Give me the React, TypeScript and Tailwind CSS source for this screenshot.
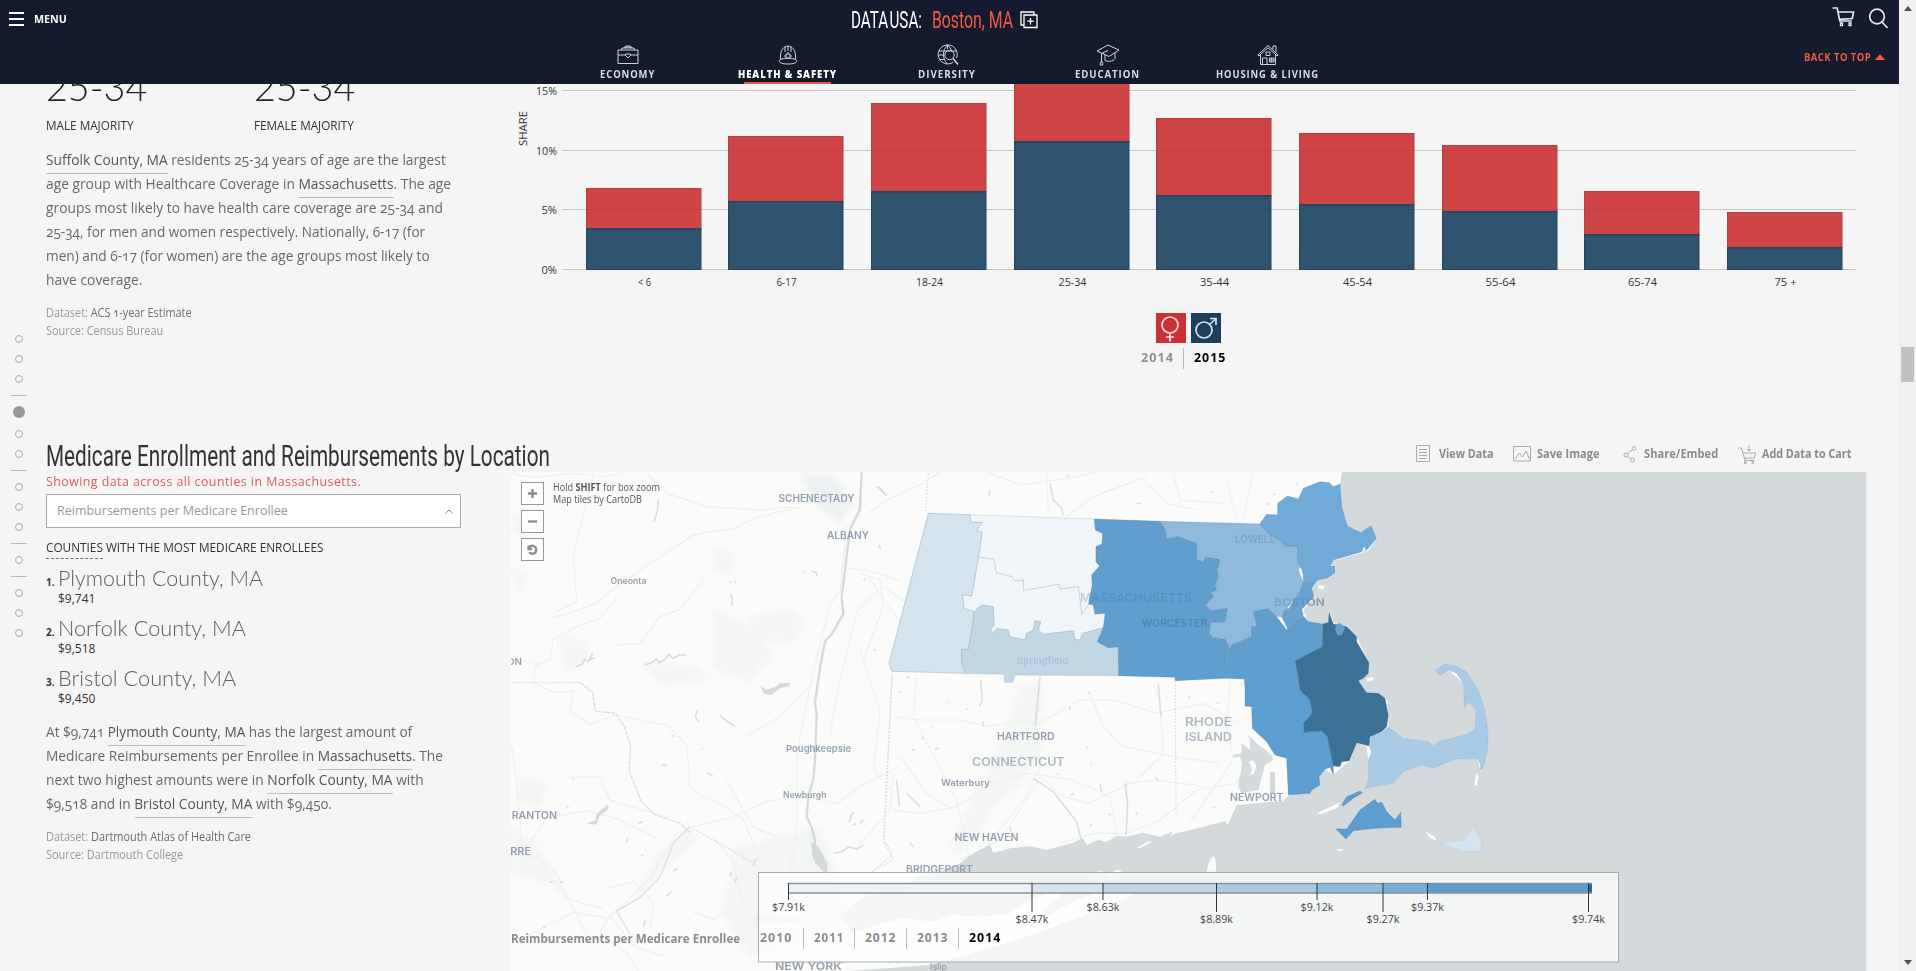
import React, { useLayoutEffect, useRef } from 'react';

const SANS = "font-['Open_Sans','Noto_Sans',sans-serif]";

/** Single line of text, squeezed or stretched horizontally to a given width. */
function Fit({ w, className = '', children }: { w: number; className?: string; children: React.ReactNode }) {
  const ref = useRef<HTMLSpanElement>(null);
  useLayoutEffect(() => {
    const el = ref.current;
    if (el && el.offsetWidth) el.style.transform = `scaleX(${w / el.offsetWidth})`;
  }, [w]);
  return (
    <span className={`block shrink-0 whitespace-nowrap ${className}`} style={{ width: w }}>
      <span ref={ref} className="inline-block origin-left">{children}</span>
    </span>
  );
}

const Link = ({ children }: { children: React.ReactNode }) => (
  <span className="border-b border-[#bdbdbd] pb-[3.500px] text-[#555]">{children}</span>
);

/* ---------- header ---------- */

const iconProps = { fill: 'none', stroke: '#cfd3dc', strokeWidth: 1, strokeLinejoin: 'round' as const };

const icons = {
  economy: (
    <svg width="22" height="22" viewBox="0 0 22 22" {...iconProps}>
      <path d="M1 6h20v13.500H1zM1 11h7.500M13.500 11H21M8.500 10h5v1.500L11 13.800 8.500 11.500zM4 6l1-2h12l1 2M7 4l1.500-2h5L15 4M9 4V3h4v1" />
    </svg>
  ),
  health: (
    <svg width="22" height="22" viewBox="0 0 22 22" {...iconProps}>
      <path d="M3.500 15.500V12c0-5 2.500-9.500 7.500-10 5 .5 7.500 5 7.500 10v3.500M2 17c1-2 4-2.500 9-2.500s8 .5 9 2.500c-.5 2-4 3-9 3s-8.500-1-9-3zM8 8V2.500M11 7V2M14 8V2.500M10 9h2v2h2v2h-2v1.500h-2V13H8v-2h2z" />
    </svg>
  ),
  diversity: (
    <svg width="22" height="22" viewBox="0 0 22 22" {...iconProps}>
      <path d="M16 18.300A9.500 9.500 0 1 1 19.500 14M2 7h17.500M1.500 11H7M3 15.500h5M10.500 1c-3 3-4 6-4 9.500s1 6.500 4 9.500M10.500 1v4M10.500 1c2 1.500 3.500 3.500 4 6" />
      <circle cx="12.500" cy="11" r="4.700" />
      <path strokeWidth="1.500" d="M16 14.500l5 6" />
    </svg>
  ),
  education: (
    <svg width="24" height="22" viewBox="0 0 24 22" {...iconProps}>
      <path d="M1 7l11-6 11 5-10 6.500zM5.500 9.500V18M12 6.500l-6.500 3M19 9v5.500c-2 3-7 3.500-10 2v-6M4.300 18h2.400v3H4.300z" />
    </svg>
  ),
  housing: (
    <svg width="22" height="22" viewBox="0 0 22 22" {...iconProps}>
      <path d="M.8 11L11 1.500 21.200 11l-1.200.8L11 3.800 2 11.800zM3.500 11v9.500h15V11M16 5V2h3v6M5.500 20.500V14h4.500v6.500M12.500 14h4.500v4h-4.500zM14.700 14v4M12.500 16H17M9 8h4v3.500H9z" />
    </svg>
  ),
};

const tabs = [
  { label: 'ECONOMY', w: 55, icon: icons.economy },
  { label: 'HEALTH & SAFETY', w: 99, icon: icons.health, active: true },
  { label: 'DIVERSITY', w: 58, icon: icons.diversity },
  { label: 'EDUCATION', w: 65, icon: icons.education },
  { label: 'HOUSING & LIVING', w: 103, icon: icons.housing },
];

function Header() {
  return (
    <header className="relative flex h-[84px] shrink-0 flex-col bg-[#141b2e] text-white">
      <div className="flex h-[40px] items-start">
        <div className="flex w-[851px] items-center pt-[10px] pl-[9px]">
          <div className="flex w-[25px] flex-col gap-[4px]">
            <i className="h-[2px] w-[15px] bg-white" />
            <i className="h-[2px] w-[15px] bg-white" />
            <i className="h-[2px] w-[15px] bg-white" />
          </div>
          <Fit w={33} className="text-[11px] leading-[18px] font-bold">MENU</Fit>
        </div>
        <Fit w={71} className="font-['Roboto',sans-serif] text-[24px] leading-[40px]">DATA<span className="ml-[2px]">USA:</span></Fit>
        <Fit w={81} className="ml-[10px] font-['Roboto',sans-serif] text-[24px] leading-[40px] text-[#ef5a46]">Boston, MA</Fit>
        <svg className="mt-[11px] ml-[7px]" width="18" height="18" viewBox="0 0 18 18" fill="none" stroke="#fff" strokeWidth="1.300">
          <path d="M4 14H1V1h13v3M4 4h13v12.500H4zM10.500 7v6.500M7.300 10.200h6.400" />
        </svg>
        <div className="ml-auto flex items-start gap-[13px] pt-[6px] pr-[10px]">
          <svg width="23" height="22" viewBox="0 0 23 22" fill="none" stroke="#e4e7ee" strokeWidth="1.700">
            <path d="M.5 2h4.700l2.600 13h12M5.800 6H21.500l-1.300 6.500-13 .8" />
            <path d="M8.500 17h2v2.500h-2zM17 17h2v2.500h-2z" strokeWidth="1.300" />
          </svg>
          <svg className="mt-px" width="21" height="22" viewBox="0 0 21 22" fill="none" stroke="#e4e7ee" strokeWidth="1.700">
            <circle cx="9" cy="9.500" r="7.300" />
            <path d="M14 15l5.500 6" />
          </svg>
        </div>
      </div>
      <div className="flex h-[44px] pl-[547px]">
        {tabs.map((t) => (
          <div key={t.label} className="flex w-[160px] flex-col items-center pt-[4px]">
            <div className="flex h-[22px] justify-center pl-px">{t.icon}</div>
            <Fit w={t.w} className={`text-[10.5px] leading-[16px] tracking-[1px] ${t.active ? 'font-extrabold text-white' : 'font-bold text-[#d8dbe3]'}`}>{t.label}</Fit>
            {t.active && <i className="h-[2px] w-[87px] bg-[#ef5a46]" />}
          </div>
        ))}
        <div className="ml-auto flex items-start gap-[4px] pt-[8px] pr-[14px]">
          <Fit w={67} className="text-[10px] leading-[18px] font-bold tracking-[0.500px] text-[#ef5a46]">BACK TO TOP</Fit>
          <svg className="mt-[6px]" width="10" height="6" viewBox="0 0 10 6"><path d="M0 6L5 0l5 6z" fill="#ef5a46" /></svg>
        </div>
      </div>
    </header>
  );
}

/* ---------- age chart ---------- */

const bars = [
  { label: '< 6', x: 586, top: 188, mid: 228.5, tw: 13 },
  { label: '6-17', x: 728, top: 136, mid: 201.5, tw: 20 },
  { label: '18-24', x: 871, top: 103, mid: 191.5, tw: 27 },
  { label: '25-34', x: 1014, top: 70, mid: 141.500, tw: 28 },
  { label: '35-44', x: 1156, top: 118, mid: 195.5, tw: 29 },
  { label: '45-54', x: 1299, top: 133, mid: 204.5, tw: 29 },
  { label: '55-64', x: 1442, top: 145, mid: 211.5, tw: 30 },
  { label: '65-74', x: 1584, top: 191, mid: 234.500, tw: 29 },
  { label: '75 +', x: 1727, top: 212, mid: 247.500, tw: 22 },
];

function AgeChart() {
  return (
    <svg width="1388" height="224" viewBox="511 84 1388 224" className="block" fontSize="11" fill="#333">
      {[90.5, 150.5, 209.5, 269.5].map((y, i) => (
        <g key={y}>
          <path d={`M562.500 ${y}H1856`} stroke="#c6c6c6" />
          <text x="557" y={y + 4} textAnchor="end" textLength={i < 2 ? 21 : 15.500} lengthAdjust="spacingAndGlyphs">{['15%', '10%', '5%', '0%'][i]}</text>
        </g>
      ))}
      <text transform="translate(527 146) rotate(-90)" textLength="35" lengthAdjust="spacingAndGlyphs">SHARE</text>
      {bars.map((b) => (
        <g key={b.label}>
          <rect x={b.x + 0.5} y={b.top + 0.5} width="114.500" height={b.mid - b.top} fill="#c92c2d" fillOpacity=".88" stroke="#b04045" />
          <rect x={b.x + 0.5} y={b.mid} width="114.500" height={269.500 - b.mid} fill="#16405f" fillOpacity=".89" stroke="#27435e" />
          <text x={b.x + 58.500} y="285.500" textAnchor="middle" textLength={b.tw} lengthAdjust="spacingAndGlyphs">{b.label}</text>
        </g>
      ))}
    </svg>
  );
}

/* ---------- side navigation ---------- */

function SideDots() {
  return (
    <nav className="absolute top-[245px] left-0 flex w-[37px] flex-col items-center">
      {'ooo-Aoo-ooo-o-ooo'.split('').map((k, i) =>
        k === 'o' ? (
          <span key={i} className="flex h-[20px] items-center"><i className="size-[8px] rounded-full border border-[#aaa]" /></span>
        ) : k === 'A' ? (
          <span key={i} className="mb-[2.300px] flex h-[20px] items-center"><i className="size-[12px] rounded-full bg-[#999]" /></span>
        ) : (
          <span key={i} className="flex h-[12.900px] items-center"><i className="h-px w-[16px] bg-[#bbb]" /></span>
        ),
      )}
    </nav>
  );
}

/* ---------- map ---------- */

const west = {
  berkshire: '205,130 330,134 332,155 367,157 350,180 367,187 356,262 336,378 308,375 313,415 342,425 338,470 325,538 305,538 305,575 317,610 95,604 87,580',
  franklin: '330,134 703,147 706,180 728,190 726,222 708,230 708,275 719,288 695,315 697,345 686,402 665,435 655,350 600,357 597,343 490,362 490,330 465,333 455,320 408,308 402,268 356,262 367,187 350,180 367,157 332,155',
  hampshire: '356,262 402,268 408,308 455,320 465,333 490,330 490,362 597,343 600,357 655,350 665,435 686,402 700,405 705,432 736,430 730,473 668,490 660,510 645,508 640,482 548,493 535,480 542,455 525,452 520,480 500,490 495,510 450,500 445,480 410,476 400,488 390,480 402,465 400,410 365,405 342,425 313,415 308,375 336,378',
  hampden: '342,425 365,405 400,410 402,465 390,480 400,488 410,476 445,480 450,500 495,510 500,490 520,480 525,452 542,455 535,480 548,493 640,482 645,508 660,510 668,490 730,473 712,515 745,533 775,530 776,617 465,615 458,637 433,637 432,613 317,610 305,575 305,538 325,538 338,470',
  worcester: '703,147 900,154 917,180 918,207 955,200 1010,220 1010,270 1030,275 1036,262 1078,268 1078,285 1070,300 1076,320 1065,345 1070,360 1050,370 1062,378 1037,405 1052,423 1102,415 1095,455 1052,457 1048,490 1060,503 1095,508 1108,528 1095,560 1097,625 945,632 945,622 776,617 775,530 745,533 712,515 730,473 736,430 705,432 700,405 686,402 697,345 695,315 719,288 708,275 708,230 726,222 728,190 706,180',
};

const east = {
  middlesex: '-30,184 270,192 290,165 298,185 292,218 325,238 345,258 383,258 383,305 393,318 385,330 400,368 390,395 360,430 335,470 315,468 295,450 250,455 262,500 245,500 245,530 180,558 165,538 130,533 118,520 122,487 165,485 172,445 122,453 107,435 132,408 120,400 140,390 135,375 146,350 140,330 148,315 148,298 106,292 100,305 80,300 80,250 25,230 -12,237 -13,210',
  essex: '270,192 290,163 323,165 323,130 352,108 385,117 400,85 450,65 478,68 490,80 510,72 515,140 532,198 572,218 603,197 620,235 590,270 582,258 575,275 490,300 480,318 495,318 495,340 470,355 445,360 415,375 400,368 400,345 392,318 383,305 383,258 345,258 325,238 292,218',
  suffolk: '400,368 415,375 440,362 425,385 432,410 395,448 400,465 385,480 355,510 335,470 345,450 355,445 345,468 365,430 390,395',
  norfolk: '250,455 295,447 318,468 350,510 375,485 400,468 415,485 455,492 457,560 375,603 225,680 223,657 167,655 165,590 180,558 245,530 245,500 262,500',
  plymouth: '477,458 490,492 530,500 560,530 560,545 597,608 595,640 580,655 565,662 590,698 625,700 645,715 652,750 655,765 650,800 635,815 600,830 598,858 560,848 538,902 515,905 510,920 490,918 472,830 455,812 402,817 400,790 427,760 420,720 390,690 383,640 375,603 457,560 457,492 475,487',
  hull: '497,495 510,490 525,505 515,525 503,527 495,510',
  bristol: '225,680 375,603 383,640 390,690 420,720 427,760 400,790 402,817 455,812 472,830 490,918 490,945 480,922 465,928 447,950 450,975 425,990 420,1000 390,1002 355,1005 350,895 315,885 290,845 247,805 245,740 225,738',
  barnstable: '655,802 700,835 775,845 790,857 810,843 885,825 915,808 918,750 895,725 883,745 880,670 860,640 835,630 810,647 795,630 825,612 860,618 890,635 925,690 945,750 955,820 953,870 940,920 928,932 932,915 925,895 855,898 790,925 755,915 700,935 670,970 585,985 595,960 595,900 605,875 598,858 603,830 635,817',
  elizabeth: '515,1035 530,1010 570,993 578,998 550,1015 520,1038',
  vineyard: '498,1107 530,1107 570,1050 615,1018 622,1030 635,1027 650,1055 675,1080 692,1057 694,1102 615,1105 550,1112 528,1137',
  nantucket: '812,1150 885,1140 908,1098 935,1145 935,1175 880,1175',
};

const water =
  '517,36 510,72 515,140 532,198 572,218 603,197 622,235 592,275 585,265 578,278 488,303 482,315 498,318 496,343 465,357 440,362 425,390 435,410 400,450 415,485 445,495 475,485 477,458 492,488 530,500 560,530 597,608 595,640 565,662 590,698 625,700 652,720 655,770 655,802 700,835 775,845 790,857 885,825 915,808 918,750 895,725 883,745 880,670 835,630 810,647 795,630 825,612 860,618 890,635 925,690 945,750 955,820 953,870 930,935 925,895 855,898 790,925 755,915 700,935 670,970 585,985 595,960 595,900 590,860 560,848 540,902 512,925 490,945 465,928 447,950 450,975 425,990 355,1008 340,1022 200,1035 180,1080 172,1095 165,1083 100,1100 0,1125 10,1113 -30,1130 -80,1118 -130,1130 -160,1128 -190,1145 -215,1140 -250,1155 -262,1135 -290,1148 -370,1170 -420,1158 -480,1165 -530,1178 -540,1155 -590,1180 -630,1210 -680,1230 -750,1250 -800,1275 -860,1290 -930,1320 -990,1370 -960,1400 -960,1535 2200,1535 2200,36';

const roads = [
  'M30 0q60 20 130 8t150 4l60-12M280 0l-30 120-30 130 10 130-60 30M0 560l60-10 50 20 40-20 10-60 80-40 60-20 50-60M150 430l60-15 80-30 60-50 90-60 60-40 80-50 50-10 70-10 60-30 80-20 70-15',
  'M440 0l60 60 120 40 160 10 100-10M340 510l80-5 60-80 60-20 70-90M0 690l40 140 30 300M110 560l-10 60 60 30 60-5-10 60 60 40 80-30 80 20 70 10 60 60 10 120 30 30 70 30 60 40 50 120',
  'M80 1110l60-90 120-20 80 20 130 60M110 1130l60 60 60 120 30 60 100 30M570 1050l120-30 120-50 120-10 80 20 80-60 90-40',
  'M570 1050l-60 50-60 100-60 60-60 50-30 50 80 60 40 60',
  'M1085 0l-10 130-35 30-20 190-30 40-50 200-40 190-10 60 0 200-20 150 10 120M1100 300l70 100 30 40M1130 350l-60 60-60 250-20 120M1030 280l80 10 90 30',
  'M0 1110l110 30 90 120 110 30M200 900l100 0 30 70 180 50M680 910l80 140 80 30 70 120M740 780l100-60 90-90',
  'M320 1230l80-20 60 60-10 80M60 1380l160-80 120 20 60 80 90 30M640 1080l60 70 30 130M580 1300l60 20 90-50',
];

const ctRoads = [
  'M100 200l80 10 120 0 90 20 90-20 60 10 120-70 100 0 130 40 140-30 110 60',
  'M170 80l-10 120 130 250 40 180M540 80l-10 150 10 120-50 100-110 140M300 630l120-60 60-90 60-100 70 60 80 20 120-60 80-10 150 20',
  'M800 390l0 160M880 100l20 60 10 150-90 90M100 480l80 10 110-20 90-60 120-40 140 20 110 50 30 160M690 130l40 100 60 60 150 30 140 20',
  'M1110 90l-10 140 20 100-70 100-60 90M600 580l100-30 100 0 100-40 110-90 120-20 40-80M120 320l80 110 80 50M0 0l60 180-20 180 60 70M0 580l90-100 10-110',
];

const lakes =
  'M475 175l-2 30-10 36M228 670l18-6 8-15 12 6 12-25M270 650l15-6M435 665l20-6 15-12 6 12 20-10 10-15 14 12 18-10 22 0M592 800l-6 20 10 14M660 815l20 16 25 16M692 455l5 14-2 22M688 420h6M702 419h6M910 392h5M936 388l12 4 4 12M485 960l16 4M515 876h8M604 914h4M620 985l18 8M1048 1130l6-20 8-10M1060 1140l8-6M1080 1135l10-12M1000 1222l26-4 20-14 24 6 20-12M760 1262l8-24M380 1180l2 10M425 1230h6M520 1275l12-8M415 1135l14-6M705 1310l4-16M690 1290l4-12M1138 310l3 10M1135 137l22 26M1122 620h4M1092 412h4M200 1085h6M220 1000v6M430 1440l6-20M500 1350l14-14M130 1440h8M150 1308h6M180 1310l10-4';

type MapLabel = [string, number, number, number, number, string?];
const labels: MapLabel[] = [
  ['SCHENECTADY', 778.5, 502, 76, 10],
  ['ALBANY', 827, 538.5, 42, 10],
  ['Oneonta', 610.5, 583.5, 36, 8.5],
  ['ON', 507, 664.500, 15, 9.5],
  ['Poughkeepsie', 786, 752, 65, 9.500],
  ['Newburgh', 783, 798, 43.500, 8.5],
  ['SCRANTON', 497, 819, 60, 10],
  ['BARRE', 495, 855, 36, 10],
  ['HARTFORD', 997, 740, 57.500, 10.500],
  ['CONNECTICUT', 972, 766, 92.500, 12, '#a9b6c0'],
  ['Waterbury', 941, 786, 49, 9],
  ['NEW HAVEN', 954.500, 841, 64, 10],
  ['BRIDGEPORT', 906, 873, 67, 10],
  ['NEW YORK', 775, 970, 67, 11],
  ['Islip', 930, 970, 17, 8.500],
  ['Stamford', 863, 899, 40, 9, '#c4cad2'],
  ['Paterson', 757, 922, 41, 9, '#c4cad2'],
  ['RHODE', 1185, 726, 47, 12, '#a9b6c0'],
  ['ISLAND', 1185, 741, 47, 12, '#a9b6c0'],
  ['NEWPORT', 1230, 801, 53.500, 10],
  ['BOSTON', 1274, 605.500, 51, 11, '#a3a9b8'],
];
const shaded: MapLabel[] = [
  ['MASSACHUSETTS', 1080, 601.5, 112, 12, '#2e6894'],
  ['WORCESTER', 1142, 627, 65, 10.500, '#16405f'],
  ['LOWELL', 1235, 543, 40, 10.500, '#3f6a92'],
  ['Springfield', 1017, 664, 51, 9.500, '#6c8096'],
  ['BOSTON', 1274, 605.500, 51, 11, '#3f6a92'],
];

const MapText = ({ items, opacity }: { items: MapLabel[]; opacity: number }) => (
  <g opacity={opacity} fontWeight="600" className="font-['Inter',sans-serif]">
    {items.map(([t, x, y, w, s, c]) => (
      <text key={t} x={x} y={y} fontSize={s} textLength={w} lengthAdjust="spacingAndGlyphs" fill={c ?? '#8f9cac'}>{t}</text>
    ))}
  </g>
);

const stops = [788.5, 1032, 1103, 1216.5, 1317, 1383, 1427.5, 1588.5, 1592];
const ramp = ['#edf3f9', '#d8e5f0', '#c1d7e8', '#a8cae3', '#8ebbdd', '#76add7', '#5d9dce', '#36658c'];
const ticks = ['$7.91k', '$8.47k', '$8.63k', '$8.89k', '$9.12k', '$9.27k', '$9.37k', '$9.74k'];
const low = [false, true, false, true, false, true, false, true];

function CountyMap() {
  return (
    <svg width="1355" height="499" viewBox="511 472 1355 499" className="block">
      <rect x="511" y="472" width="1355" height="499" fill="#fbfbf9" />
      <g fill="none" stroke="#eeeff0" strokeWidth="3.500" strokeLinejoin="round">
        <g transform="translate(500 440) scale(.3333 .338) translate(0 97)">
          <g stroke="none" fill="#f4f6f5" className="blur-[6px]">
            <path d="M640 220l70 20-20 60-50-10zM740 430l120-30 60 40-40 60-130 0zM640 400l120 60 60 80-80 80-100-40zM170 480l90 20 0 60-60 30zM470 1130l100-100 20 60-200 180zM30 1050l90 60 80 130-170-60zM40 120l60 10-20 60-40-10zM30 280l60 20-30 60zM420 560l160 10 60 40-160 20z" />
            <path fill="#eef1f3" d="M900 0l100 10 60 80-40 60-70-50z" />
            <path fill="#f3f4f4" d="M60 900l80 20-20 70-70-20zM700 1110l260-60 120 330-330 50-80-120z" />
          </g>
          {roads.map((d) => <path key={d} d={d} />)}
          <path stroke="#d6dadc" d={lakes} transform="translate(0 -97)" strokeWidth="4.500" />
        </g>
        <g transform="translate(500 440) scale(.3333 .338)">
          <path stroke="#d4dadc" strokeWidth="7" d="M1085 95l-5 110-30 60-15 120-10 80 5 50-35 60-20 20-15 80-15 100 5 40-5 130-5 60-15 50-5 60 15 30 10 40-5 40 10 30" />
          <path fill="#d4dadc" stroke="none" d="M932 1190l20 10 30 50 0 40-40-45zM782 725l14 14 30-8 14-12 32 0-4 10-26 4-30 22-22-6zM260 1134l26-8 4-20 34-28 2 12-28 24-10 24z" />
          <path stroke="#d9dbde" strokeDasharray="5 5" d="M36 718h206M580 1150l180 100M1177 690l-25 500 30 50-70 40" />
          <path stroke="#d6d9db" strokeWidth="3.500" strokeDasharray="12 3" d="M242 718l36 30 8 55 60 5 28 40 18 60-5 70 36 90 40 40 76 25 35 30" />
          <path stroke="#dcdfe0" strokeWidth="4" d="M570 1143l-50 50-40 100-60 60-70 40 40 70" />
        </g>
        <g transform="translate(860 650) scale(.33333)">
          <path stroke="none" fill="#f4f5f5" className="blur-[6px]" d="M480 110l60-20 10 190-60 120-80 60-60 100-60 60-20-40 60-120 60-100z" />
          {ctRoads.map((d) => <path key={d} d={d} />)}
          <path stroke="#d8dcdf" strokeWidth="4.500" d="M540 80l-15 150M520 385l60 40 70 90 15 60M795 400l8 60-5 95M362 90l5 60-8 20M110 390l8 80M140 430l40 40M895 100l8 100M685 130l4-4M630 170v10M450 530l4 16M885 380l10 14M720 400l4 26M150 580l10 10M590 370l6 6M1060 470l6 4M115 127h6M140 85l10-6M264 155h4M320 178h4M370 215v15M215 230h4M186 260l4 8M225 298l12-4M155 300h10M632 436l12-6M680 292h6M690 342h4M752 252h4M985 142h6M1070 160h6M1145 100v6M745 490l8 6M690 525h6M828 486l2 8" />
          <path stroke="#f2c3c6" strokeDasharray="4 6" d="M946 95l2 400" />
          <path stroke="#d6d0d4" strokeDasharray="4 6" d="M96 75l-25 490 25 50-60 50M205-530l-8 120" />
        </g>
        <g transform="translate(860 470) scale(.33333)">
          <path d="M240 5l-60 40-90 40-60 40M380 5l100 40 140-20 100-20M560 5l5 130M860 20l-160 60-80 60M860 40l60 60 90 20M0 310l60 20 10 80-60 160M70 350l70 50M1100 30l40 160M1180 10l-40 180M940 10l20 80 130 10" />
          <path stroke="#d6dadc" strokeWidth="4" d="M570 40l10 50 25 25 5 22M50 48l30 30M390 60l-4 20M620 20l6-6M56 232h6M10 330h6M40 540h6M830 100h14M1055 66h6M1220 100l10 4M1240 75l6-4M1310 40v4" />
        </g>
      </g>
      <g transform="translate(1170 460) scale(.33333)">
        <polygon points={water} fill="#d4dadc" />
        <path fill="#d4dadc" d="M190 885l25-5v-30l25 20 0-30-10-20 30 30 45 35 5 15-25 15-20 75-50 10-10-20 5-40zM300 935h15v65h-15z" />
        <g fill="#fbfbf9">
          <path d="M190 895l20-6 6 20-4 34-14 2-8-20zM236 905l12-4 12 14-8 26-12 6 6-20z" />
          <path d="M126 1190l8 0 4 20 0 25h-28l4-20zM-100 1165l30-20 20-2-40 22zM442 1060l30-15 40-20-10 18-50 20zM500 1168h18v5h-16zM765 1112l30 20 5 10-20-8zM920 940l6 10-6 28-8-4zM445 375l20 4-6 10-14-4zM590 655l20-4 0 10-18 4z" />
          <path d="M-960 1420l100-30 60-15 90 10 60-20 80 5 90-10 60-40 80-30 20 10-60 50 20 15 60-35 100-40 120-10-30 25-120 50-160 60-120 40-140 40-70 20-270 20zM-190 1245l30-15 20 0-30 14zM-240 1240l40-10-20 14z" />
        </g>
      </g>
      <MapText items={labels} opacity={0.95} />
      <g stroke="#3f7096" strokeOpacity=".4" strokeWidth="2" strokeLinejoin="round">
        <g transform="translate(860 470) scale(.33333)">
          <polygon points={west.berkshire} fill="#d4e4ef" />
          <polygon points={west.franklin} fill="#eff5f9" strokeOpacity=".25" />
          <polygon points={west.hampshire} fill="#eff5f9" strokeOpacity=".25" />
          <polygon points={west.hampden} fill="#c1d7e6" strokeOpacity=".25" />
          <polygon points={west.worcester} fill="#609fcd" />
        </g>
        <g transform="translate(1170 460) scale(.33333)">
          <polygon points={east.middlesex} fill="#8fbadd" />
          <polygon points={east.essex} fill="#70abd7" />
          <polygon points={east.norfolk} fill="#5f9ecd" />
          <polygon points={east.suffolk} fill="#68a3d1" />
          <polygon points={east.bristol} fill="#5c9ecf" />
          <polygon points={east.plymouth} fill="#3b7097" />
          <polygon points={east.hull} fill="#62a0cf" />
          <polygon points={east.barnstable} fill="#a8cae4" strokeOpacity=".2" />
          <polygon points={east.elizabeth} fill="#5c9ecf" />
          <polygon points={east.vineyard} fill="#5c9ecf" />
          <polygon points={east.nantucket} fill="#d3e3ef" strokeOpacity=".1" />
        </g>
      </g>
      <MapText items={shaded} opacity={0.25} />

      <rect x="758.500" y="872.500" width="860" height="89.500" fill="#fff" fillOpacity=".75" stroke="#a9acad" />
      {ramp.map((c, i) => <rect key={c} x={stops[i]} y="883" width={stops[i + 1] - stops[i]} height="10" fill={c} />)}
      <path d="M788.500 883.500H1592M788.500 893H1592" stroke="#8c8f92" strokeWidth="1.500" fill="none" />
      <g fontSize="11.500" fill="#444">
        {ticks.map((t, i) => (
          <g key={t}>
            <path d={`M${stops[i]} 883V${low[i] ? 912 : 900}`} stroke="#333" />
            <text x={stops[i]} y={low[i] ? 922.5 : 910.5} textAnchor="middle" textLength="33" lengthAdjust="spacingAndGlyphs">{t}</text>
          </g>
        ))}
      </g>
    </svg>
  );
}

function MapButton({ d }: { d: string }) {
  return (
    <button className="flex size-[23px] items-center justify-center border border-[#999] bg-white">
      <svg width="11" height="11" viewBox="0 0 11 11" fill="none" stroke="#8c8c8c" strokeWidth="2.300"><path d={d} /></svg>
    </button>
  );
}

const years = [
  ['2010', 32, 'pr-[11px]'],
  ['2011', 30, 'border-l pl-[10px] pr-[10px]'],
  ['2012', 31, 'border-l pl-[10px] pr-[10px]'],
  ['2013', 31, 'border-l pl-[10px] pr-[9.500px]'],
  ['2014', 32, 'border-l pl-[10px] text-black'],
] as const;

/* ---------- lower section ---------- */

const tool = { fill: 'none', stroke: '#aaa', strokeWidth: 1 };

function Toolbar() {
  const t = 'text-[11.500px] leading-[18px] font-bold text-[#8b8b8b]';
  return (
    <div className="ml-auto flex h-[32px] items-center pr-[48px]">
      <svg width="15" height="18" viewBox="0 0 15 18" {...tool}><path d="M.5.5h13v16H.5zM3 4.500h8M3 7.500h8M3 10.500h8M3 13.500h8" /></svg>
      <Fit w={54.500} className={`ml-[8px] ${t}`}>View Data</Fit>
      <svg className="ml-[20px]" width="18" height="16" viewBox="0 0 18 16" {...tool}><path d="M.5.5h17v14.500H.5zM2 13l4.500-6 3 4 3.500-6 3.500 8" /></svg>
      <Fit w={62.500} className={`ml-[6px] ${t}`}>Save Image</Fit>
      <svg className="ml-[23px]" width="14" height="17" viewBox="0 0 14 17" {...tool}>
        <circle cx="3" cy="9" r="2" /><circle cx="11" cy="2.500" r="1.800" /><circle cx="9.500" cy="14" r="2" /><path d="M4.500 7.700l5-4M4.500 10.300l3.500 2.500" />
      </svg>
      <Fit w={74.500} className={`ml-[7px] ${t}`}>Share/Embed</Fit>
      <svg className="ml-[20px]" width="19" height="19" viewBox="0 0 19 19" {...tool}><path d="M0 3h3.500l3.500 12.500h9.500M4.700 8h13l-1.500 5H6.300M11 0v6M9 4l2 2 2-2M6.500 16.500h1.500v2H6.500zM14 16.500h1.500v2H14z" /></svg>
      <Fit w={89} className={`ml-[5px] ${t}`}>Add Data to Cart</Fit>
    </div>
  );
}

const counties = [
  { n: '1.', name: 'Plymouth County, MA', w: 205, value: '$9,741' },
  { n: '2.', name: 'Norfolk County, MA', w: 188, value: '$9,518' },
  { n: '3.', name: 'Bristol County, MA', w: 178, value: '$9,450' },
];

function Credits({ dataset, source, dw, sw }: { dataset: string; source: string; dw: number; sw: number }) {
  return (
    <div className="mt-[13px] text-[12px] leading-[18px] text-[#999] oldstyle-nums">
      <Fit w={dw}>Dataset: <span className="text-[#6c6c6c]">{dataset}</span></Fit>
      <Fit w={sw}>Source: {source}</Fit>
    </div>
  );
}

export default function App() {
  return (
    <div className={`flex h-[971px] w-[1916px] overflow-hidden bg-[#f5f5f5] text-[#333] ${SANS}`}>
      <div className="flex w-[1899px] shrink-0 flex-col overflow-hidden">
        <Header />
        <main className="relative flex flex-col">
          <SideDots />
          <section className="flex h-[354px] overflow-hidden">
            <div className="w-[465px] shrink-0 ml-[46px]">
              <div className="mt-[-18px] flex font-['Lato',sans-serif] text-[38px] leading-[40px] font-light text-[#222]">
                <Fit w={101} className="mr-[106.500px]">25-34</Fit>
                <Fit w={101}>25-34</Fit>
              </div>
              <div className="mt-[11px] flex text-[12px] leading-[18px]">
                <Fit w={87} className="mr-[120.500px]">MALE MAJORITY</Fit>
                <Fit w={99.5}>FEMALE MAJORITY</Fit>
              </div>
              <div className="mt-[12px] text-[15px] leading-[24px] text-[#686868] oldstyle-nums">
                <Fit w={400}><Link>Suffolk County, MA</Link> residents 25-34 years of age are the largest</Fit>
                <Fit w={405.5}>age group with Healthcare Coverage in <Link>Massachusetts</Link>. The age</Fit>
                <Fit w={397}>groups most likely to have health care coverage are 25-34 and</Fit>
                <Fit w={379}>25-34, for men and women respectively. Nationally, 6-17 (for</Fit>
                <Fit w={384}>men) and 6-17 (for women) are the age groups most likely to</Fit>
                <Fit w={96}>have coverage.</Fit>
              </div>
              <Credits dataset="ACS 1-year Estimate" source="Census Bureau" dw={146} sw={117} />
            </div>
            <div>
              <AgeChart />
              <div className="mt-[5px] flex gap-[5px] pl-[645px]">
                <svg width="30" height="30" viewBox="0 0 30 30" fill="none" stroke="#f6dede" strokeWidth="1.700">
                  <rect width="30" height="30" fill="#c93135" stroke="none" />
                  <circle cx="14" cy="12" r="8" /><path d="M14 20v8.500M10 24h8" />
                </svg>
                <svg width="30" height="30" viewBox="0 0 30 30" fill="none" stroke="#d3e0ea" strokeWidth="1.700">
                  <rect width="30" height="30" fill="#1c3f5e" stroke="none" />
                  <circle cx="13" cy="17" r="8" /><path d="M18.500 11.500L25 5.500M19 5.500h6V12" />
                </svg>
              </div>
              <div className="mt-[5px] flex pl-[630px] text-[12px] leading-[20px] font-bold text-[#909090]">
                <Fit w={32.5} className="tracking-[1px]">2014</Fit>
                <div className="ml-[9.500px] h-[21px] border-l border-[#bbb] pl-[10px]"><Fit w={32} className="tracking-[1px] text-black">2015</Fit></div>
              </div>
            </div>
          </section>

          <section className="flex h-[533px] flex-col">
            <div className="flex h-[34px] pl-[46px]">
              <h2><Fit w={504} className="font-['Roboto',sans-serif] text-[30px] leading-[35px] font-normal">Medicare Enrollment and Reimbursements by Location</Fit></h2>
              <Toolbar />
            </div>
            <div className="flex">
              <div className="w-[465px] shrink-0 ml-[46px]">
                <Fit w={315} className="text-[13px] leading-[18px] tracking-[0.500px] text-[#dd5a55]">Showing data across all counties in Massachusetts.</Fit>
                <div className="mt-[4px] flex h-[34px] w-[415px] items-center justify-between border border-[#aaa] bg-white pr-[7px] pl-[10px] text-[12.500px] leading-[18px] text-[#999]">
                  <Fit w={231}>Reimbursements per Medicare Enrollee</Fit>
                  <svg width="8" height="5" viewBox="0 0 8 5" fill="none" stroke="#888"><path d="M.5 4.500L4 1l3.500 3.500" /></svg>
                </div>
                <Fit w={277} className="mt-[11px] text-[12px] leading-[18px]"><span className="border-b border-dashed border-[#666] pb-[2px]">COUNTIES</span> WITH THE MOST MEDICARE ENROLLEES</Fit>
                <ol className="mt-[7px]">
                  {counties.map((c) => (
                    <li key={c.n} className="h-[50px]">
                      <div className="flex h-[28px] items-baseline">
                        <span className="w-[12px] text-[10px] font-bold">{c.n}</span>
                        <Fit w={c.w} className="font-['Lato',sans-serif] text-[22px] leading-[28px] font-light text-[#5c5c5c]">{c.name}</Fit>
                      </div>
                      <Fit w={37} className="mt-[-2px] ml-[12px] text-[12px] leading-[18px]">{c.value}</Fit>
                    </li>
                  ))}
                </ol>
                <div className="mt-[5px] text-[15px] leading-[24px] text-[#686868] oldstyle-nums">
                  <Fit w={366.5}>At $9,741 <Link>Plymouth County, MA</Link> has the largest amount of</Fit>
                  <Fit w={397}>Medicare Reimbursements per Enrollee in <Link>Massachusetts</Link>. The</Fit>
                  <Fit w={378}>next two highest amounts were in <Link>Norfolk County, MA</Link> with</Fit>
                  <Fit w={286}>$9,518 and in <Link>Bristol County, MA</Link> with $9,450.</Fit>
                </div>
                <Credits dataset="Dartmouth Atlas of Health Care" source="Dartmouth College" dw={205} sw={137.5} />
              </div>
              <div className="relative">
                <CountyMap />
                <div className="absolute top-[10px] left-[10px] flex gap-[9px]">
                  <div className="flex flex-col gap-[5px]">
                    <MapButton d="M5.500 1v9M1 5.500h9" />
                    <MapButton d="M1 5.500h9" />
                    <MapButton d="M1.500 1.500v3.500H5M1.800 4.500C3 2 5 1.500 6.500 2c4 1.500 3.500 7.500-1 7.800-1.500 0-2.500-.5-3.500-1.500" />
                  </div>
                  <div className="mt-[-1.500px] text-[10px] leading-[12.500px] text-[#555]">
                    <Fit w={107}>Hold <b>SHIFT</b> for box zoom</Fit>
                    <Fit w={89}>Map tiles by CartoDB</Fit>
                  </div>
                </div>
                <div className="absolute top-[456px] left-0 flex text-[12px] leading-[20px] font-bold text-[#8c8c8c]">
                  <Fit w={229} className="mr-[20px] text-[13px]">Reimbursements per Medicare Enrollee</Fit>
                  {years.map(([y, w, c]) => (
                    <div key={y} className={`h-[21px] border-[#bbb] tracking-[1px] ${c}`}><Fit w={w}>{y}</Fit></div>
                  ))}
                </div>
              </div>
            </div>
          </section>
        </main>
      </div>
      <aside className="flex w-[17px] shrink-0 flex-col items-center bg-[#f0f0f0]">
        <svg className="mt-[6px]" width="8" height="5" viewBox="0 0 8 5"><path d="M0 5l4-5 4 5z" fill="#505050" /></svg>
        <div className="mt-[336px] h-[35px] w-[13px] bg-[#c1c1c1]" />
        <svg className="mt-auto mb-[6px]" width="8" height="5" viewBox="0 0 8 5"><path d="M0 0l4 5 4-5z" fill="#505050" /></svg>
      </aside>
    </div>
  );
}
